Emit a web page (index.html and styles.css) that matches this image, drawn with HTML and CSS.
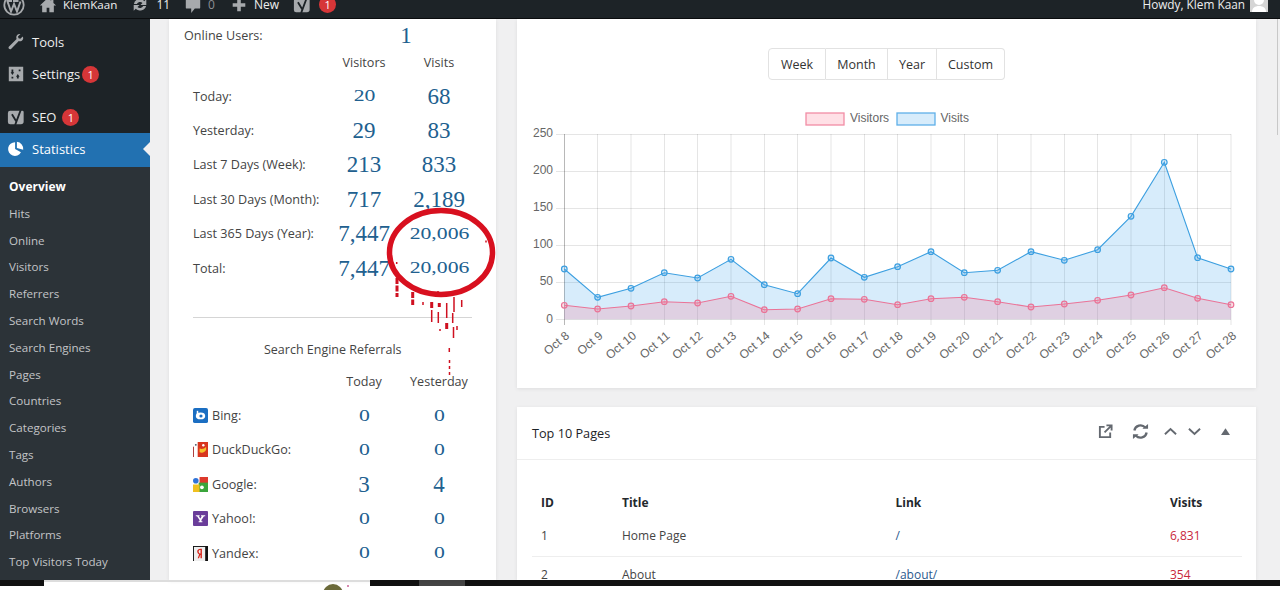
FILE: index.html
```html
<!DOCTYPE html>
<html lang="en">
<head>
<meta charset="utf-8">
<title>Statistics</title>
<link rel="stylesheet" href="styles.css">
</head>
<body>
<header class="adminbar">
  <div class="bar-left">
    <svg class="bar-icon wp" viewBox="0 0 22 22"><circle cx="11" cy="11" r="9.700" fill="none" stroke="currentColor" stroke-width="1.800"/><path d="M4.500 7.500 8 17.500 11 10l3 7.500 3.500-10M3.500 7h5.500M10 7h5.500" fill="none" stroke="currentColor" stroke-width="2"/></svg>
    <svg class="bar-icon home" viewBox="0 0 20 20"><path d="M10 2 1 10.500h2.500V18h5v-5h3v5h5v-7.500H19L16 7.700V3h-2.500v2.400z" fill="currentColor"/></svg>
    <span class="bar-text site">KlemKaan</span>
    <svg class="bar-icon sync" viewBox="0 0 20 20"><path d="M10 3.500c2 0 3.600.9 4.700 2.300L17 3.500V10h-6.500l2.300-2.300A3.900 3.900 0 0 0 6.500 9H3.200A6.900 6.900 0 0 1 10 3.500zM3 16.500V10h6.500l-2.300 2.300A3.900 3.900 0 0 0 13.500 11h3.300A6.900 6.900 0 0 1 5.300 14.200z" fill="currentColor"/></svg>
    <span class="bar-text count">11</span>
    <svg class="bar-icon comment" viewBox="0 0 20 20"><path d="M3 2h14a1 1 0 0 1 1 1v10a1 1 0 0 1-1 1h-5l-4 5v-5H3a1 1 0 0 1-1-1V3a1 1 0 0 1 1-1z" fill="currentColor"/></svg>
    <span class="bar-text zero">0</span>
    <svg class="bar-icon plus" viewBox="0 0 20 20"><path d="M8 3h4v5h5v4h-5v5H8v-5H3V8h5z" fill="currentColor"/></svg>
    <span class="bar-text new">New</span>
    <svg class="bar-icon yoast" viewBox="0 0 20 20"><path d="M3.500 3H17a1.500 1.500 0 0 1 1.500 1.500V15a3 3 0 0 1-3 3H3.500A2.500 2.500 0 0 1 1 15.500v-10A2.500 2.500 0 0 1 3.500 3z" fill="currentColor"/><path d="M5.500 7 10 14.500M15.500 1.500 9 19" fill="none" stroke="#1d2327" stroke-width="2"/></svg>
    <span class="badge bar-badge">1</span>
  </div>
  <div class="bar-right">
    <span class="bar-text howdy">Howdy, Klem Kaan</span>
    <svg class="avatar" viewBox="0 0 18 18"><rect width="18" height="18" fill="#d5d5d5"/><circle cx="9" cy="6" r="5" fill="#fff"/><path d="M2 18c0-4 3-6 7-6s7 2 7 6z" fill="#fff"/></svg>
  </div>
</header>

<div class="workspace">
  <nav class="sidebar">
    <ul class="menu">
      <li class="menu-item">
        <svg class="menu-icon" viewBox="0 0 20 20"><path d="M17.500 3.800 14.800 6.500l-2-.6-.6-2L15 1.200C12.600.5 10 2.300 10.300 5c0 .8.200 1.300.4 1.700L2 15.300c-1.300 1.400 1.200 3.700 2.500 2.400l8.600-8.700c3 1 6.200-2 4.400-5.200z" fill="currentColor"/></svg>
        <span>Tools</span>
      </li>
      <li class="menu-item">
        <svg class="menu-icon" viewBox="0 0 20 20"><path fill-rule="evenodd" d="M2 2h16v16H2zM5 5v3H4l2 3 2-3H7V5zm0 8v2h2v-2zm8-8v2h2V5zm-1 5-2 3h1v2h2v-2h1z" fill="currentColor"/></svg>
        <span>Settings</span><span class="badge">1</span>
      </li>
      <li class="menu-item seo">
        <svg class="menu-icon" viewBox="0 0 20 20"><path d="M3.500 3H17a1.500 1.500 0 0 1 1.500 1.500V15a3 3 0 0 1-3 3H3.500A2.500 2.500 0 0 1 1 15.500v-10A2.500 2.500 0 0 1 3.500 3z" fill="currentColor"/><path d="M5.500 7 10 14.500M15.500 1.500 9 19" fill="none" stroke="#1d2327" stroke-width="2"/></svg>
        <span>SEO</span><span class="badge">1</span>
      </li>
      <li class="menu-item current">
        <svg class="menu-icon" viewBox="0 0 20 20"><path d="M9 2.500V10l6.500 3.700A7.600 7.600 0 1 1 9 2.500zM11 2a7.800 7.800 0 0 1 7 8.800L11 8.800z" fill="currentColor"/></svg>
        <span>Statistics</span>
      </li>
    </ul>
    <ul class="submenu">
      <li class="active">Overview</li>
      <li>Hits</li>
      <li>Online</li>
      <li>Visitors</li>
      <li>Referrers</li>
      <li>Search Words</li>
      <li>Search Engines</li>
      <li>Pages</li>
      <li>Countries</li>
      <li>Categories</li>
      <li>Tags</li>
      <li>Authors</li>
      <li>Browsers</li>
      <li>Platforms</li>
      <li>Top Visitors Today</li>
    </ul>
  </nav>

  <main class="content">
    <section class="card summary">
      <div class="online"><span>Online Users:</span><span class="num one">1</span></div>
      <div class="stat-row head"><span></span><span>Visitors</span><span>Visits</span></div>
      <div class="stat-row"><span>Today:</span><span class="num low">20</span><span class="num">68</span></div>
      <div class="stat-row"><span>Yesterday:</span><span class="num">29</span><span class="num">83</span></div>
      <div class="stat-row"><span>Last 7 Days (Week):</span><span class="num">213</span><span class="num">833</span></div>
      <div class="stat-row"><span>Last 30 Days (Month):</span><span class="num">717</span><span class="num">2,189</span></div>
      <div class="stat-row"><span>Last 365 Days (Year):</span><span class="num">7,447</span><span class="num low">20,006</span></div>
      <div class="stat-row"><span>Total:</span><span class="num">7,447</span><span class="num low">20,006</span></div>
      <hr class="rule">
      <h3 class="referrals">Search Engine Referrals</h3>
      <div class="stat-row head"><span></span><span>Today</span><span>Yesterday</span></div>
      <div class="stat-row"><span class="engine"><svg class="engine-icon" viewBox="0 0 16 16"><rect width="16" height="16" rx="2" fill="#1b6ec2"/><ellipse cx="8" cy="8.500" rx="5" ry="3.600" fill="#fff"/><circle cx="8.500" cy="8.500" r="1.700" fill="#1b6ec2"/><rect x="4" y="3" width="1.600" height="6" fill="#fff"/></svg>Bing:</span><span class="num low">0</span><span class="num low">0</span></div>
      <div class="stat-row"><span class="engine"><svg class="engine-icon" viewBox="0 0 16 16"><rect x="5" width="11" height="16" fill="#d8361f"/><rect y="5" width="1" height="11" fill="#a33"/><path d="M7 7c3 1 5 0 7-2v3c-1 3-4 4-7 3z" fill="#f6c22b"/><circle cx="3" cy="3" r="1" fill="#456"/><circle cx="11" cy="3.500" r="1.300" fill="#fff"/></svg>DuckDuckGo:</span><span class="num low">0</span><span class="num low">0</span></div>
      <div class="stat-row"><span class="engine"><svg class="engine-icon" viewBox="0 0 16 16"><rect width="16" height="16" fill="#fff"/><rect x="7" width="9" height="7" fill="#dd3a2c"/><rect x="6" y="6" width="10" height="10" fill="#3aa53c"/><rect y="8" width="7" height="8" fill="#f0c020"/><circle cx="3" cy="4" r="3" fill="#2f73d8"/><circle cx="9.500" cy="11" r="2" fill="#fff"/></svg>Google:</span><span class="num">3</span><span class="num">4</span></div>
      <div class="stat-row"><span class="engine"><svg class="engine-icon" viewBox="0 0 16 16"><rect width="16" height="16" rx="1" fill="#6a3d9a"/><path d="M3 4.500h4v1H6.200L7.800 8l1.600-2.500H8.600v-1H13v1h-1.300L9 9.500V11h1v1H6v-1h1V9.500L4.300 5.500H3z" fill="#fff"/></svg>Yahoo!:</span><span class="num low">0</span><span class="num low">0</span></div>
      <div class="stat-row"><span class="engine"><svg class="engine-icon" viewBox="0 0 16 16"><rect width="16" height="16" fill="#111"/><rect x="1" y="1" width="12" height="15" fill="#eee"/><path d="M5 13l1.500-4C5 8 4.500 7 4.500 5.700 4.500 4 6 3 8 3h1.500v10H8V9.500H7.700L6.400 13zM8 4.200c-1 0-2 .4-2 1.600S7 8 8 8z" fill="#d8261c"/></svg>Yandex:</span><span class="num low">0</span><span class="num low">0</span></div>
      <svg class="scribble" viewBox="367 197 130 200">
        <ellipse cx="441" cy="252.500" rx="51.500" ry="42" fill="none" stroke="#d8101f" stroke-width="5.500"/>
        <path class="drip thick" d="M397 278v19M412.700 292v13M439.300 303v4M446.700 323v7M431.700 302v6"/>
        <path class="drip" d="M396.700 262v2M486 240.500v2M423 302v3M431.700 310v12M438.300 312v11M440 329v2M446.700 303v15M452.700 313v10M454 297v15M453.500 327v11M457 326v4M461.700 300v7M438 291v2M449.300 348v4"/>
        <path class="drip dashed" d="M449.500 360v17"/>
      </svg>
    </section>

    <div class="column">
      <section class="card chart-card">
        <div class="range">
          <button class="range-btn week">Week</button><button class="range-btn month">Month</button><button class="range-btn year">Year</button><button class="range-btn custom">Custom</button>
        </div>
        <svg class="chart" viewBox="517 100 739 270">
          <g class="legend">
            <rect x="806" y="113" width="38" height="12" fill="#ffe0e6" stroke="#f28da5" stroke-width="1.300"/>
            <text x="850" y="122">Visitors</text>
            <rect x="897" y="113" width="38" height="12" fill="#d7ecfb" stroke="#5fb0e8" stroke-width="1.300"/>
            <text x="940.500" y="122">Visits</text>
          </g>
          <g class="grid">
            <path d="M556 134.500H1231M556 171.500H1231M556 208.500H1231M556 245.500H1231M556 282.500H1231M556 319.500H1231"/>
            <path d="M597.500 134V325M631 134V325M664.500 134V325M697.500 134V325M731 134V325M764.500 134V325M797.500 134V325M831 134V325M864.500 134V325M897.500 134V325M931 134V325M964.500 134V325M997.500 134V325M1031 134V325M1064.500 134V325M1097.500 134V325M1131 134V325M1164.500 134V325M1197.500 134V325M1231 134V325"/>
            <path class="axis" d="M564.500 134V325"/>
          </g>
          <g class="y-labels">
            <text x="553" y="137">250</text><text x="553" y="174">200</text><text x="553" y="211">150</text><text x="553" y="248">100</text><text x="553" y="285">50</text><text x="553" y="322.500">0</text>
          </g>
          <polygon class="area visits" points="564.300,319.300 564.300,269 597.600,297.300 631,288.300 664.300,272.700 697.600,278 731,259.300 764.300,284.700 797.600,293.700 831,258 864.300,277.300 897.600,266.700 931,251.700 964.300,272.700 997.600,270.300 1031,251.700 1064.300,260.300 1097.600,249.700 1131,216.300 1164.300,162.300 1197.600,257.700 1231,269 1231,319.300"/>
          <polygon class="area visitors" points="564.300,319.300 564.300,305.300 597.600,309 631,306 664.300,301.700 697.600,303 731,296.300 764.300,309.700 797.600,309 831,298.700 864.300,299.300 897.600,304.700 931,298.700 964.300,297.300 997.600,301.700 1031,307 1064.300,304 1097.600,300.300 1131,295 1164.300,287.700 1197.600,298.300 1231,304.700 1231,319.300"/>
          <polyline class="line visits" points="564.300,269 597.600,297.300 631,288.300 664.300,272.700 697.600,278 731,259.300 764.300,284.700 797.600,293.700 831,258 864.300,277.300 897.600,266.700 931,251.700 964.300,272.700 997.600,270.300 1031,251.700 1064.300,260.300 1097.600,249.700 1131,216.300 1164.300,162.300 1197.600,257.700 1231,269"/>
          <polyline class="line visitors" points="564.300,305.300 597.600,309 631,306 664.300,301.700 697.600,303 731,296.300 764.300,309.700 797.600,309 831,298.700 864.300,299.300 897.600,304.700 931,298.700 964.300,297.300 997.600,301.700 1031,307 1064.300,304 1097.600,300.300 1131,295 1164.300,287.700 1197.600,298.300 1231,304.700"/>
          <g class="dots visits">
            <circle cx="564.300" cy="269" r="2.800"/><circle cx="597.600" cy="297.300" r="2.800"/><circle cx="631" cy="288.300" r="2.800"/><circle cx="664.300" cy="272.700" r="2.800"/><circle cx="697.600" cy="278" r="2.800"/><circle cx="731" cy="259.300" r="2.800"/><circle cx="764.300" cy="284.700" r="2.800"/><circle cx="797.600" cy="293.700" r="2.800"/><circle cx="831" cy="258" r="2.800"/><circle cx="864.300" cy="277.300" r="2.800"/><circle cx="897.600" cy="266.700" r="2.800"/><circle cx="931" cy="251.700" r="2.800"/><circle cx="964.300" cy="272.700" r="2.800"/><circle cx="997.600" cy="270.300" r="2.800"/><circle cx="1031" cy="251.700" r="2.800"/><circle cx="1064.300" cy="260.300" r="2.800"/><circle cx="1097.600" cy="249.700" r="2.800"/><circle cx="1131" cy="216.300" r="2.800"/><circle cx="1164.300" cy="162.300" r="2.800"/><circle cx="1197.600" cy="257.700" r="2.800"/><circle cx="1231" cy="269" r="2.800"/>
          </g>
          <g class="dots visitors">
            <circle cx="564.300" cy="305.300" r="2.800"/><circle cx="597.600" cy="309" r="2.800"/><circle cx="631" cy="306" r="2.800"/><circle cx="664.300" cy="301.700" r="2.800"/><circle cx="697.600" cy="303" r="2.800"/><circle cx="731" cy="296.300" r="2.800"/><circle cx="764.300" cy="309.700" r="2.800"/><circle cx="797.600" cy="309" r="2.800"/><circle cx="831" cy="298.700" r="2.800"/><circle cx="864.300" cy="299.300" r="2.800"/><circle cx="897.600" cy="304.700" r="2.800"/><circle cx="931" cy="298.700" r="2.800"/><circle cx="964.300" cy="297.300" r="2.800"/><circle cx="997.600" cy="301.700" r="2.800"/><circle cx="1031" cy="307" r="2.800"/><circle cx="1064.300" cy="304" r="2.800"/><circle cx="1097.600" cy="300.300" r="2.800"/><circle cx="1131" cy="295" r="2.800"/><circle cx="1164.300" cy="287.700" r="2.800"/><circle cx="1197.600" cy="298.300" r="2.800"/><circle cx="1231" cy="304.700" r="2.800"/>
          </g>
          <g class="x-labels">
            <text transform="translate(570 337) rotate(-40)">Oct 8</text>
            <text transform="translate(603.500 337) rotate(-40)">Oct 9</text>
            <text transform="translate(637 337) rotate(-40)">Oct 10</text>
            <text transform="translate(670.500 337) rotate(-40)">Oct 11</text>
            <text transform="translate(703.500 337) rotate(-40)">Oct 12</text>
            <text transform="translate(737 337) rotate(-40)">Oct 13</text>
            <text transform="translate(770.500 337) rotate(-40)">Oct 14</text>
            <text transform="translate(803.500 337) rotate(-40)">Oct 15</text>
            <text transform="translate(837 337) rotate(-40)">Oct 16</text>
            <text transform="translate(870.500 337) rotate(-40)">Oct 17</text>
            <text transform="translate(903.500 337) rotate(-40)">Oct 18</text>
            <text transform="translate(937 337) rotate(-40)">Oct 19</text>
            <text transform="translate(970.500 337) rotate(-40)">Oct 20</text>
            <text transform="translate(1003.500 337) rotate(-40)">Oct 21</text>
            <text transform="translate(1037 337) rotate(-40)">Oct 22</text>
            <text transform="translate(1070.500 337) rotate(-40)">Oct 23</text>
            <text transform="translate(1103.500 337) rotate(-40)">Oct 24</text>
            <text transform="translate(1137 337) rotate(-40)">Oct 25</text>
            <text transform="translate(1170.500 337) rotate(-40)">Oct 26</text>
            <text transform="translate(1203.500 337) rotate(-40)">Oct 27</text>
            <text transform="translate(1237 337) rotate(-40)">Oct 28</text>
          </g>
        </svg>
      </section>

      <section class="card pages-card">
        <header class="pages-head">
          <h2>Top 10 Pages</h2>
          <div class="tools">
            <svg class="tool ext" viewBox="0 0 16 16"><path d="M7 3H2v11h11V9M9 1.500h5.500V7M14 2 7 9" fill="none" stroke="currentColor" stroke-width="2"/></svg>
            <svg class="tool sync-tool" viewBox="0 0 18 18"><path d="M2.500 8A6.600 6.600 0 0 1 14 4.800M15.500 10A6.600 6.600 0 0 1 4 13.200" fill="none" stroke="currentColor" stroke-width="2.400"/><path d="M11 6h6V1zM7 12H1v5z" fill="currentColor"/></svg>
            <svg class="tool chev" viewBox="0 0 14 9"><path d="M1 7.500 7 1.800l6 5.700" fill="none" stroke="currentColor" stroke-width="2"/></svg>
            <svg class="tool chev" viewBox="0 0 14 9"><path d="M1 1.500 7 7.200l6-5.700" fill="none" stroke="currentColor" stroke-width="2"/></svg>
            <svg class="tool tri" viewBox="0 0 8 6"><path d="M4 0 8 6H0z" fill="currentColor"/></svg>
          </div>
        </header>
        <div class="pages-table">
          <div class="page-row th"><span>ID</span><span>Title</span><span>Link</span><span>Visits</span></div>
          <div class="page-row first"><span>1</span><span>Home Page</span><span class="link">/</span><span class="hits">6,831</span></div>
          <div class="page-row second"><span>2</span><span>About</span><span class="link">/about/</span><span class="hits">354</span></div>
        </div>
      </section>
    </div>
  </main>
</div>

<footer class="strip">
  <div class="strip-dark"></div>
  <div class="strip-light"><i class="strip-dot"></i></div>
  <div class="strip-bar"><i class="strip-seg"></i></div>
</footer>
<div class="scroll-sliver"></div>
</body>
</html>
```
FILE: styles.css
```css
* { box-sizing: border-box; }
html, body { margin: 0; padding: 0; }
body {
  position: relative;
  width: 1280px;
  height: 590px;
  overflow: hidden;
  background: #f0f0f1;
  font-family: "Open Sans", "Noto Sans", sans-serif;
  font-size: 12px;
  color: #444;
}
ul { list-style: none; margin: 0; padding: 0; }

.adminbar {
  height: 19px;
  background: #1d2327;
  border-bottom: 1px solid #0b0d0f;
  color: #fff;
  display: flex;
  justify-content: space-between;
  font-size: 12px;
  overflow: hidden;
}
.bar-left, .bar-right { height: 9px; display: flex; align-items: center; }
.bar-left { color: #a7aaad; }
.bar-right { padding-right: 12px; gap: 5px; }
.bar-text { color: #eee; white-space: nowrap; line-height: 9px; }
.bar-icon { flex: none; width: 18px; height: 18px; }
.wp { width: 22px; height: 22px; margin-left: 3px; }
.home { margin-left: 14px; }
.site { margin-left: 6px; font-size: 11.600px; }
.sync { margin-left: 14px; }
.count { margin-left: 7px; }
.comment { margin-left: 14px; }
.zero { margin-left: 6px; color: #8c8f94; }
.plus { margin-left: 15px; }
.new { margin-left: 6px; }
.yoast { margin-left: 14px; }
.howdy { font-size: 11.800px; }
.badge {
  flex: none;
  width: 17px;
  height: 17px;
  border-radius: 50%;
  background: #d63638;
  color: #fff;
  font-size: 11px;
  line-height: 17px;
  text-align: center;
  margin: 1px 0 0 2px;
}
.seo .badge { margin-left: 6px; }
.bar-badge { margin: 0 0 0 8px; }
.avatar { width: 18px; height: 18px; margin-top: -3px; }

.workspace { height: 561px; display: flex; }
.sidebar { flex: none; width: 150px; background: #1d2327; display: flex; flex-direction: column; }
.menu { padding-top: 7px; }
.menu-item {
  height: 32px;
  display: flex;
  align-items: center;
  color: #eee;
  font-size: 13px;
  padding-left: 7px;
}
.menu-icon { flex: none; width: 18px; height: 18px; margin-right: 7px; color: #a7aaad; }
.seo { margin-top: 11px; }
.menu-item.current {
  position: relative;
  height: 34px;
  padding-bottom: 2px;
  background: #2271b1;
  color: #fff;
}
.current .menu-icon { color: #fff; }
.current::after {
  content: "";
  position: absolute;
  right: 0;
  top: 9px;
  border: 7px solid transparent;
  border-left-width: 0;
  border-right-color: #f0f0f1;
}
.submenu { flex: 1; background: #2c3338; padding-top: 7px; color: #c3c4c7; }
.submenu li { height: 26.800px; line-height: 26.800px; padding-left: 9px; font-size: 11.600px; white-space: nowrap; }
.submenu .active { color: #fff; font-size: 12px; font-weight: 700; }

.content { flex: 1; display: flex; gap: 21px; padding-left: 19px; min-width: 0; }
.card { background: #fff; box-shadow: 0 1px 4px rgba(0, 0, 0, .08); }
.summary { position: relative; flex: none; width: 327px; padding: 0 19.500px 0 24px; font-size: 12.600px; }
.online { display: flex; align-items: center; height: 32px; margin-left: -9px; }
.online span:first-child { flex: none; width: 185px; }
.one { width: 74px; text-align: center; }
.num {
  font-family: "Liberation Serif", serif;
  font-size: 23px;
  line-height: 1;
  color: #21608f;
  text-align: center;
}
.num.low { font-size: 17.500px; transform: scaleX(1.240); }
.stat-row {
  display: grid;
  grid-template-columns: 1fr 75px 75px;
  align-items: center;
  height: 34.400px;
  white-space: nowrap;
}
.stat-row.head { height: 23px; margin-bottom: 5px; text-align: center; }
.rule { border: 0; border-top: 1px solid #d5d5d5; margin: 32px 4.500px 0 0; }
.referrals { margin: 23px 0 0; font-size: 12.500px; font-weight: 400; text-align: center; padding-right: 4px; line-height: 18px; }
.referrals + .head { margin-top: 11px; margin-bottom: 5px; }
.engine { display: flex; align-items: center; gap: 4px; }
.engine-icon { flex: none; width: 15px; height: 15px; }
.scribble { position: absolute; left: 198px; top: 178px; width: 130px; height: 200px; overflow: visible; pointer-events: none; }
.drip { fill: none; stroke: #cf1020; stroke-width: 1.500; }
.drip.thick { stroke-width: 3; stroke-dasharray: 6 1.500; }
.drip.dashed { stroke-dasharray: 3 3; }

.column { flex: none; width: 739px; display: flex; flex-direction: column; gap: 19px; }
.chart-card { height: 369px; padding: 29px 0 18px; }
.range { display: flex; justify-content: center; }
.range-btn {
  height: 32px;
  padding: 0;
  background: #fff;
  border: 1px solid #e2e2e2;
  border-left-width: 0;
  color: #333;
  font: 12.500px "Open Sans", sans-serif;
}
.week { width: 58px; border-left-width: 1px; border-radius: 4px 0 0 4px; }
.month { width: 62px; }
.year { width: 49px; }
.custom { width: 68px; border-radius: 0 4px 4px 0; }
.chart { display: block; width: 739px; height: 270px; margin-top: 20px; font: 12px "Liberation Sans", sans-serif; fill: #666; }
.grid path { fill: none; stroke: rgba(0, 0, 0, .1); stroke-width: 1; }
.grid .axis { stroke: rgba(0, 0, 0, .28); }
.y-labels text { text-anchor: end; }
.x-labels text { text-anchor: end; }
.area.visits { fill: rgba(54, 162, 235, .2); }
.area.visitors { fill: rgba(255, 99, 132, .2); }
.line { fill: none; stroke-width: 1.100; }
.line.visits, .dots.visits { stroke: #3c9fe0; }
.line.visitors, .dots.visitors { stroke: #ea7397; }
.dots { stroke-width: 1.200; }
.dots.visits circle { fill: rgba(54, 162, 235, .2); }
.dots.visitors circle { fill: rgba(255, 99, 132, .2); }

.pages-card { flex: 1; min-height: 0; overflow: hidden; }
.pages-head {
  height: 53px;
  display: flex;
  align-items: center;
  justify-content: space-between;
  padding: 0 26px 0 15px;
  border-bottom: 1px solid #eee;
}
.pages-head h2 { margin: 0; font-size: 12.700px; font-weight: 500; color: #1d2327; }
.tools { display: flex; align-items: center; color: #646970; margin-top: -3px; }
.tool { flex: none; }
.ext { width: 15px; height: 15px; margin-right: 19px; }
.sync-tool { width: 17px; height: 17px; margin-right: 15px; }
.chev { width: 13px; height: 9px; margin-right: 11px; }
.tri { width: 9px; height: 7px; margin-left: 9px; }
.pages-table { margin: 0 14px 0 15px; padding-top: 24px; }
.page-row {
  display: grid;
  grid-template-columns: 81px 273.500px 274.500px 1fr;
  padding-left: 9px;
  align-items: center;
  font-size: 12px;
}
.page-row.th { height: 36px; font-weight: 700; color: #23282d; }
.page-row.first { height: 37px; padding-bottom: 6px; border-bottom: 1px solid #eee; }
.page-row.second { height: 34px; }
.link { color: #2c5a8e; }
.hits { color: #c8283c; }

.strip { height: 10px; display: flex; background: #fff; }
.strip-dark { width: 44px; height: 6px; background: #111; }
.strip-light { position: relative; width: 326px; border-top: 2px solid #ddd; overflow: hidden; }
.strip-dot { position: absolute; left: 279px; top: 2px; width: 20px; height: 20px; border-radius: 50%; background: #6b6a3a; }
.strip-light::after { content: ""; position: absolute; left: 303px; top: 3px; width: 2px; height: 2px; background: #d88ab0; }
.strip-bar { flex: 1; height: 6px; background: #111; }
.strip-seg { display: block; width: 46px; height: 6px; margin-left: 49px; background: #444; }
.scroll-sliver { position: absolute; right: 2px; top: 19px; width: 1px; height: 116px; background: #c8c8c8; }
```
